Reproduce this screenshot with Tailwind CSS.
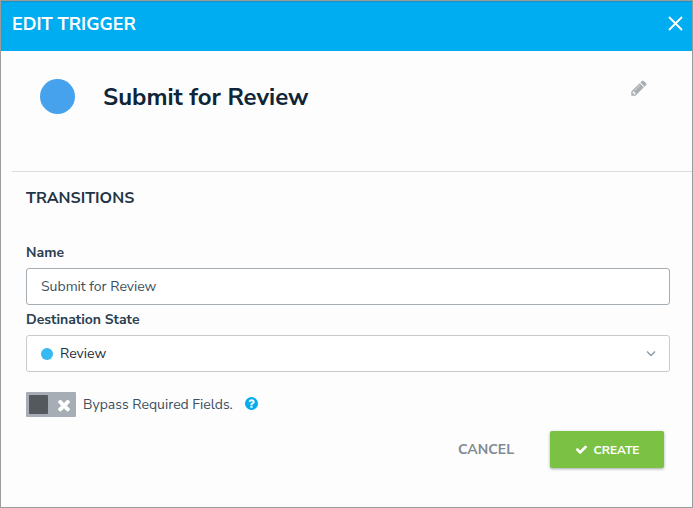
<!DOCTYPE html>
<html lang="en">
<head>
  <meta charset="UTF-8" />
  <title>Edit Trigger</title>
  <meta name="viewport" content="width=device-width, initial-scale=1.0" />
  <script src="https://cdn.jsdelivr.net/npm/@tailwindcss/browser@4"></script>
</head>
<body class="min-h-screen flex flex-col border border-[#9c9c9c] bg-[#fdfdfd] font-['Nunito_Sans','Nunito','Open_Sans',sans-serif] text-sm text-[#3d4f5e]">

  <!-- Header -->
  <header class="flex items-start justify-between bg-[#00adf0] h-[50px] pl-[11px] pr-px pt-2 text-white shadow-[inset_0_1px_1px_#1b8fbd]">
    <h1 class="text-lg leading-[30px] font-bold">EDIT TRIGGER</h1>
    <button type="button" aria-label="Close" class="p-[7px]">
      <svg class="size-[18px]" viewBox="0 0 18 18" fill="none" stroke="currentColor" stroke-width="1.800"><path d="M3 1l13 13M16 1l-13 13" /></svg>
    </button>
  </header>

  <!-- Trigger title -->
  <section class="flex items-start h-[121px] ml-[11px] pl-7 pr-11 pt-7 border-b border-[#dadcde]">
    <span class="size-[35px] rounded-full bg-[#47a2ed]"></span>
    <h2 class="ml-7 flex-1 text-2xl leading-9 font-bold text-[#0f2638]">Submit for Review</h2>
    <button type="button" aria-label="Edit title" class="text-[#a7afb5]">
      <svg class="size-[18px]" viewBox="0 0 1792 1792" fill="currentColor"><path d="M491 1536l91-91-235-235-91 91v107h128v128h107zm523-928q0-22-22-22-10 0-17 7l-542 542q-7 7-7 17 0 22 22 22 10 0 17-7l542-542q7-7 7-17zm-54-192l416 416-832 832h-416v-416zm683 96q0 53-37 90l-166 166-416-416 166-165q36-38 90-38 53 0 91 38l235 234q37 39 37 91z" /></svg>
    </button>
  </section>

  <form class="flex flex-col pl-[25px] pr-[22px] pt-3">
    <h3 class="text-base leading-7 font-bold text-[#1f3547]">TRANSITIONS</h3>

    <label for="name" class="mt-[31px] leading-5 font-bold text-[#2a3f50]">Name</label>
    <input id="name" type="text" value="Submit for Review" class="mt-[5px] h-[37px] px-[14px] rounded-[3px] border border-[#a6aeb4] bg-white focus:outline-none focus:border-[#00adf0]" />

    <label for="state" class="mt-[5px] leading-5 font-bold text-[#2a3f50]">Destination State</label>
    <div class="relative mt-[5px] flex items-center">
      <select id="state" class="w-full h-[37px] appearance-none pl-[33px] pr-8 rounded-[3px] border border-[#c8cacc] bg-white text-[#1c2d3b] focus:outline-none focus:border-[#00adf0]">
        <option>Review</option>
      </select>
      <span class="absolute left-[15px] size-3 rounded-full bg-[#36b9f1] pointer-events-none"></span>
      <svg class="absolute right-[14px] size-[10px] text-[#8c98a1] pointer-events-none" viewBox="0 0 10 10" fill="none" stroke="currentColor" stroke-width="1.300"><path d="M1 2.500l4 4 4-4" /></svg>
    </div>

    <div class="mt-5 flex items-center">
      <label for="bypass" class="flex items-center cursor-pointer">
        <input id="bypass" type="checkbox" class="peer sr-only" />
        <span class="flex items-center w-[50px] h-[25px] px-[3px] bg-[#a6adb4] rounded-[1px] peer-checked:flex-row-reverse peer-checked:bg-[#7bc143]">
          <span class="size-[19px] rounded-[1px] bg-[#53595d]"></span>
          <svg class="ml-[7px] mt-px size-[18px] text-white" viewBox="0 0 1792 1792" fill="currentColor"><path d="M1490 1322q0 40-28 68l-136 136q-28 28-68 28t-68-28l-294-294-294 294q-28 28-68 28t-68-28l-136-136q-28-28-28-68t28-68l294-294-294-294q-28-28-28-68t28-68l136-136q28-28 68-28t68 28l294 294 294-294q28-28 68-28t68 28l136 136q28 28 28 68t-28 68l-294 294 294 294q28 28 28 68z" /></svg>
        </span>
        <span class="ml-[7px] leading-5">Bypass Required Fields.</span>
      </label>
      <button type="button" aria-label="Help" class="ml-[11px] mb-0.5 text-[#00adf0]">
        <svg class="size-[15px]" viewBox="0 0 1792 1792" fill="currentColor"><path d="M1024 1376v-192q0-14-9-23t-23-9h-192q-14 0-23 9t-9 23v192q0 14 9 23t23 9h192q14 0 23-9t9-23zm256-672q0-88-55.500-163t-138.500-116-170-41q-243 0-371 213-15 24 8 42l132 100q7 6 19 6 16 0 25-12 53-68 86-92 34-24 86-24 48 0 85.500 26t37.500 59q0 38-20 61t-68 45q-63 28-115.500 86.500t-52.500 125.500v36q0 14 9 23t23 9h192q14 0 23-9t9-23q0-19 21.500-49.500t54.500-49.500q32-18 49-28.500t46-35 44.500-48 28-60.500 12.500-81zm384 192q0 209-103 385.500t-279.500 279.500-385.500 103-385.500-103-279.500-279.500-103-385.500 103-385.500 279.500-279.500 385.500-103 385.500 103 279.500 279.500 103 385.500z" /></svg>
      </button>
    </div>

    <div class="mt-3.5 pr-1.5 flex justify-end items-center gap-9">
      <button type="button" class="h-[37px] font-bold text-[#7f8a93]">CANCEL</button>
      <button type="submit" class="flex items-center justify-center gap-1.5 w-[114px] h-[37px] rounded-[2px] bg-[#7bc143] text-xs font-bold text-white shadow-[0_1px_3px_rgba(0,0,0,0.35)]">
        <svg class="size-[13px]" viewBox="0 0 1792 1792" fill="currentColor"><path d="M1671 566q0 40-28 68l-724 724-136 136q-28 28-68 28t-68-28l-136-136-362-362q-28-28-28-68t28-68l136-136q28-28 68-28t68 28l294 295 656-657q28-28 68-28t68 28l136 136q28 28 28 68z" /></svg>
        CREATE
      </button>
    </div>
  </form>

</body>
</html>
